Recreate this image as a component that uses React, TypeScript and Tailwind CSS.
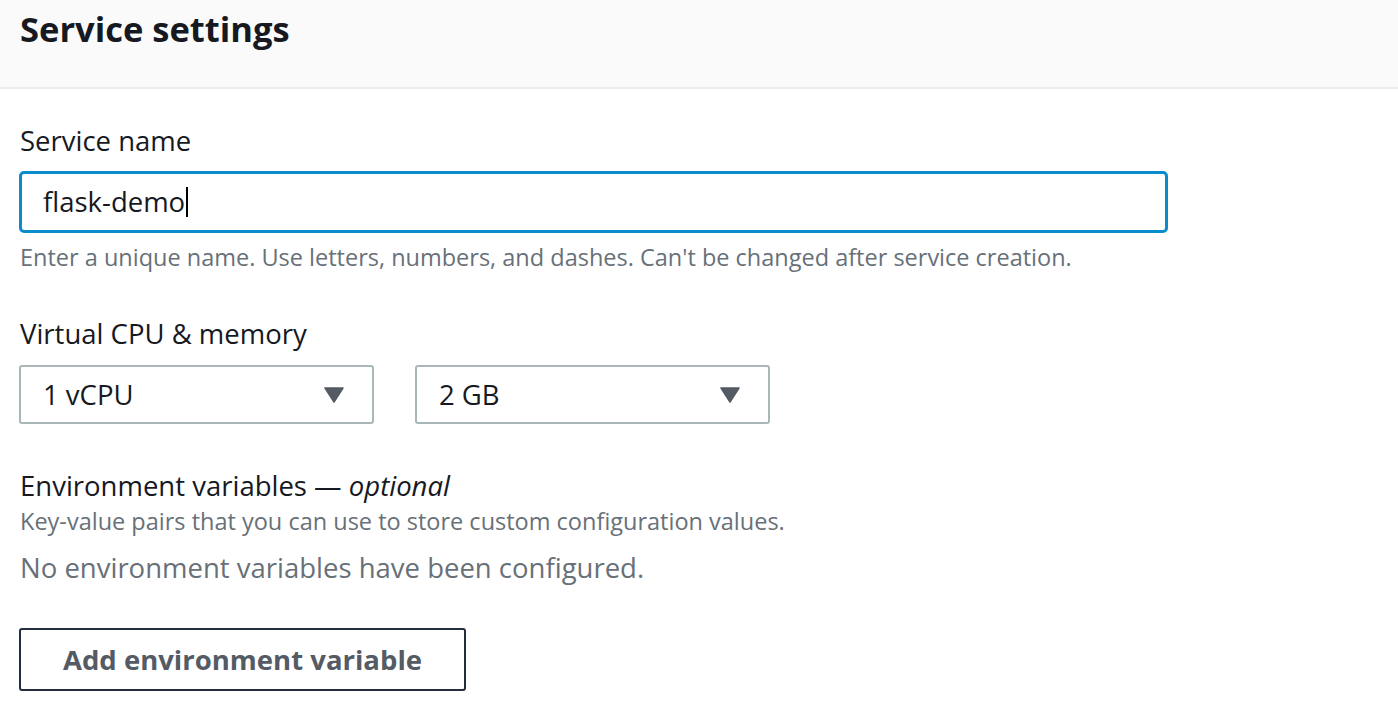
import React from "react";

function Caret() {
  return (
    <svg width="20" height="16" viewBox="0 0 20 16" className="shrink-0">
      <path d="M1 1 L19 1 L10 15 Z" fill="#545b64" stroke="#545b64" strokeWidth="1.5" strokeLinejoin="round" />
    </svg>
  );
}

function Select({ value }: { value: string }) {
  return (
    <div className="w-[355px] h-[59px] border-2 border-[#aab7b8] rounded-[3px] bg-white flex items-center justify-between pl-[22px] pr-[28px]">
      <span className="text-[27.5px] text-[#16191f] leading-[32px]">{value}</span>
      <Caret />
    </div>
  );
}

export default function App() {
  return (
    <div className="w-[1398px] h-[718px] bg-white overflow-hidden font-['Open_Sans',sans-serif] text-[#16191f]">
      <div className="h-[89px] bg-[#fafafa] border-b-2 border-[#eaeded] px-[20px] pt-[9px]">
        <h2 className="text-[34.5px] font-bold leading-[40px] text-[#16191f]">Service settings</h2>
      </div>
      <div className="px-[19px] flex flex-col items-start">
        <div className="mt-[36px] text-[27.5px] leading-[32px] pl-[1px]">Service name</div>
        <div className="mt-[14px] w-[1149px] h-[62px] border-[3px] border-[#0a8ccd] rounded-[5px] flex items-center pl-[21px]">
          <span className="text-[27.5px] leading-[32px] text-[#16191f]">flask-demo</span>
          <span className="w-[2px] h-[30px] bg-black ml-[1px]" />
        </div>
        <div className="mt-[10px] text-[23.5px] leading-[28px] text-[#687078] pl-[1px]">
          Enter a unique name. Use letters, numbers, and dashes. Can't be changed after service creation.
        </div>
        <div className="mt-[47px] text-[27.5px] leading-[32px] pl-[1px]">Virtual CPU &amp; memory</div>
        <div className="mt-[15px] flex gap-[41px]">
          <Select value="1 vCPU" />
          <Select value="2 GB" />
        </div>
        <div className="mt-[46px] text-[27.5px] leading-[32px] pl-[1px]">
          Environment variables — <i>optional</i>
        </div>
        <div className="mt-[5px] text-[23.5px] leading-[28px] text-[#687078] pl-[1px]">
          Key-value pairs that you can use to store custom configuration values.
        </div>
        <div className="mt-[17px] text-[27.5px] leading-[32px] text-[#687078] pl-[1px]">
          No environment variables have been configured.
        </div>
        <button className="mt-[44px] w-[447px] h-[63px] border-2 border-[#232f3e] rounded-[3px] bg-white text-[27.5px] font-bold text-[#545b64] flex items-center justify-center">
          Add environment variable
        </button>
      </div>
    </div>
  );
}
